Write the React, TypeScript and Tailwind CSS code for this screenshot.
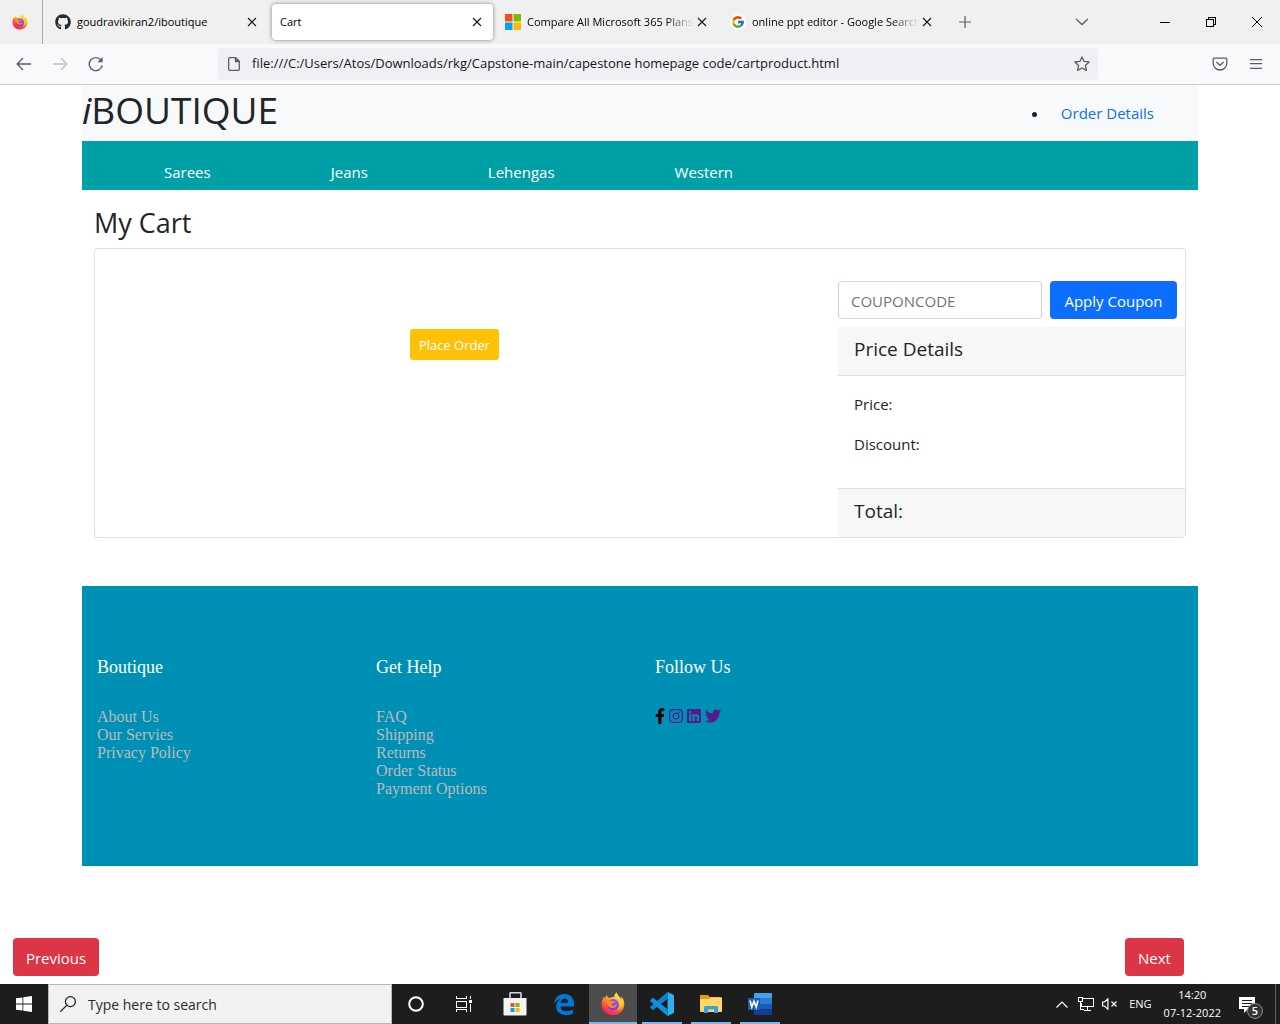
import type { ReactNode } from "react";
import { FaFacebookF, FaGithub, FaInstagram, FaLinkedin, FaTwitter } from "react-icons/fa";
import { FcGoogle } from "react-icons/fc";

function FirefoxLogo({ className, id }: { className: string; id: string }) {
  return (
    <svg viewBox="0 0 24 24" className={className} aria-hidden="true">
      <defs>
        <linearGradient id={`${id}-flame`} x1="0.8" y1="0" x2="0.3" y2="1">
          <stop offset="0" stopColor="#fff44f" />
          <stop offset="0.35" stopColor="#ffb61f" />
          <stop offset="0.65" stopColor="#ff5a3c" />
          <stop offset="1" stopColor="#f5156c" />
        </linearGradient>
        <radialGradient id={`${id}-globe`} cx="0.6" cy="0.3" r="0.8">
          <stop offset="0" stopColor="#a259ff" />
          <stop offset="1" stopColor="#5b3bd0" />
        </radialGradient>
      </defs>
      <path
        fill={`url(#${id}-flame)`}
        d="M15.6.5c-1.500 1-2.300 2.800-2.400 4.600-1.600-.2-3.300 0-4.700.8C7 5.500 6.200 4.300 6 2.900 5 3.700 4.500 4.900 4.300 6 3.800 5.800 3.300 5.300 3 4.700 1 7.200.4 10.200.7 13 1.300 19 6.200 23.300 12 23.300c6.500 0 11.300-5.200 11.300-11.200 0-2.900-1.200-6-3.200-7.600.3 1 .4 2 .2 2.900C19.200 4.800 16.500 3.300 15.600.5z"
      />
      <circle cx="12.200" cy="12.600" r="5.600" fill={`url(#${id}-globe)`} />
      <path
        fill="#ff8a1f"
        d="M4.300 9.300c2-1.500 4.500-1.300 6.200-.2l2.900.2c-.2 1.200-1.400 1.700-2.600 2.100-.8.300-1 1.500.1 2.100 1.800 1 3.200-.8 5-.4-.8 2.200-3 3.400-5.300 2.900-3.600-.8-4.300-4.200-6.300-6.700z"
      />
      <path fill="#ffd43a" d="M15.600.5c-1.500 1-2.300 2.800-2.400 4.600 2.600.5 5 2.700 5.300 5.600.8 3.600-.7 6.200-2.600 7.700 3.600-.8 5.600-3.900 5.400-7.300-.2-4-4.900-6-5.700-10.600z" opacity=".75" />
    </svg>
  );
}

function Windows10Logo({ className }: { className: string }) {
  return (
    <svg viewBox="0 0 16 16" className={className} fill="#fff" aria-hidden="true">
      <path d="M0 2.300 6.500 1.400v6.200H0zM7.300 1.300 16 0v7.600H7.300zM0 8.400h6.500v6.200L0 13.700zM7.300 8.400H16V16l-8.700-1.300z" />
    </svg>
  );
}

function MicrosoftLogo({ className }: { className: string }) {
  return (
    <svg viewBox="0 0 15 15" className={className} aria-hidden="true">
      <path fill="#f25022" d="M0 0h7v7H0z" />
      <path fill="#7fba00" d="M8 0h7v7H8z" />
      <path fill="#00a4ef" d="M0 8h7v7H0z" />
      <path fill="#ffb900" d="M8 8h7v7H8z" />
    </svg>
  );
}

function CloseGlyph() {
  return (
    <svg viewBox="0 0 10 10" className="size-2.5" fill="none" stroke="#15141a" strokeWidth="1.100" aria-hidden="true">
      <path d="m1 1 8 8M9 1 1 9" />
    </svg>
  );
}

function Tab({ title, icon, active, fade }: { title: string; icon?: ReactNode; active?: boolean; fade?: boolean }) {
  return (
    <div className="flex w-[225px] shrink px-0.5 py-1">
      <div
        className={
          active
            ? "flex w-full items-center gap-1.5 rounded bg-white px-2 shadow-[0_0_4px_rgba(0,0,0,0.45)]"
            : "flex w-full items-center gap-1.5 px-2"
        }
      >
        {icon}
        <span
          className={
            fade
              ? "min-w-0 flex-1 overflow-hidden whitespace-nowrap [mask-image:linear-gradient(to_left,transparent,black_28px)]"
              : "min-w-0 flex-1 overflow-hidden whitespace-nowrap"
          }
        >
          {title}
        </span>
        <button type="button" aria-label={`Close ${title}`} className="-ml-1.5 flex size-4 shrink-0 items-center justify-center">
          <CloseGlyph />
        </button>
      </div>
    </div>
  );
}

function BrowserChrome() {
  return (
    <header className="text-[#15141a]">
      <div className="flex h-11 bg-[#f0f0f0] text-[11px] text-black">
        <div className="mr-0.5 flex w-[43px] shrink-0 items-center justify-center border-r border-[#a9a9a9]">
          <FirefoxLogo id="ff-tab" className="mr-0.5 size-4" />
        </div>
        <Tab title="goudravikiran2/iboutique" icon={<FaGithub className="size-4 shrink-0 text-[#24292f]" />} />
        <Tab title="Cart" active />
        <Tab title="Compare All Microsoft 365 Plans" fade icon={<MicrosoftLogo className="size-4 shrink-0" />} />
        <Tab
          title="online ppt editor - Google Search"
          fade
          icon={
            <span className="flex size-4 shrink-0 items-center justify-center rounded-full bg-white">
              <FcGoogle className="size-3.5" />
            </span>
          }
        />
        <button type="button" aria-label="New tab" className="ml-1 flex w-8 items-center justify-center">
          <svg viewBox="0 0 12 12" className="size-3" stroke="#5b5b66" strokeWidth="1.200" aria-hidden="true">
            <path d="M6 0v12M0 6h12" />
          </svg>
        </button>
        <div className="ml-auto flex">
          <button type="button" aria-label="List all tabs" className="mr-11 flex w-8 items-center justify-center">
            <svg viewBox="0 0 14 8" className="h-2 w-3.5" fill="none" stroke="#5b5b66" strokeWidth="1.300" aria-hidden="true">
              <path d="m1 1 6 5.500L13 1" />
            </svg>
          </button>
          <button type="button" aria-label="Minimize" className="flex w-[46px] items-center justify-center">
            <svg viewBox="0 0 10 10" className="size-2.5" stroke="#000" shapeRendering="crispEdges" aria-hidden="true">
              <path d="M0 5.500h10" />
            </svg>
          </button>
          <button type="button" aria-label="Restore" className="flex w-[46px] items-center justify-center">
            <svg viewBox="0 0 10 10" className="size-2.5" fill="none" stroke="#000" shapeRendering="crispEdges" aria-hidden="true">
              <path d="M.5 2.500h7v7h-7zM2.500 2.500v-2h7v7h-2" />
            </svg>
          </button>
          <button type="button" aria-label="Close window" className="flex w-[46px] items-center justify-center">
            <svg viewBox="0 0 10 10" className="size-2.5" stroke="#000" aria-hidden="true">
              <path d="m0 0 10 10M10 0 0 10" />
            </svg>
          </button>
        </div>
      </div>

      <div className="flex h-[41px] items-center border-b border-[#cccccf] bg-[#f9f9fb] px-2">
        <nav aria-label="History" className="flex w-[210px] shrink-0 gap-1">
          <button type="button" aria-label="Back" className="flex size-8 items-center justify-center">
            <svg viewBox="0 0 16 16" className="size-4" fill="none" stroke="#5b5b66" strokeWidth="1.300" aria-hidden="true">
              <path d="M15 8H1.500M7 2 1.200 8 7 14" />
            </svg>
          </button>
          <button type="button" aria-label="Forward" disabled className="flex size-8 items-center justify-center">
            <svg viewBox="0 0 16 16" className="size-4" fill="none" stroke="#bfbfc5" strokeWidth="1.300" aria-hidden="true">
              <path d="M1 8h13.500M9 2l5.800 6L9 14" />
            </svg>
          </button>
          <button type="button" aria-label="Reload" className="flex size-8 items-center justify-center">
            <svg viewBox="0 0 16 16" className="size-4" fill="none" stroke="#5b5b66" strokeWidth="1.400" aria-hidden="true">
              <path d="M14.200 9.300A6.500 6.500 0 1 1 13 4.200" />
              <path d="M14.600 1v5.200H9.400z" fill="#5b5b66" stroke="none" />
            </svg>
          </button>
        </nav>
        <div className="flex h-8 min-w-0 max-w-[880px] flex-1 items-center rounded bg-[#f0f0f4] px-2">
          <svg viewBox="0 0 16 16" className="size-4 shrink-0" fill="none" stroke="#5b5b66" strokeWidth="1.300" strokeLinejoin="round" aria-hidden="true">
            <path d="M3.700 1.700h5.800l3.800 3.800v7.800a1 1 0 0 1-1 1H3.700a1 1 0 0 1-1-1V2.700a1 1 0 0 1 1-1z" />
            <path d="M9.500 1.700v3.800h3.800z" fill="#5b5b66" />
          </svg>
          <input
            type="text"
            aria-label="Address"
            defaultValue="file:///C:/Users/Atos/Downloads/rkg/Capstone-main/capestone homepage code/cartproduct.html"
            className="ml-2.5 min-w-0 flex-1 bg-transparent text-[13px] outline-none"
          />
          <button type="button" aria-label="Bookmark this page" className="shrink-0">
            <svg viewBox="0 0 16 16" className="size-4" fill="none" stroke="#5b5b66" strokeWidth="1.300" strokeLinejoin="round" aria-hidden="true">
              <path d="m8 .9 2.100 4.500 5 .6-3.700 3.400 1 5L8 12l-4.400 2.400 1-5L.9 6l5-.6z" />
            </svg>
          </button>
        </div>
        <div className="ml-auto flex gap-1">
          <button type="button" aria-label="Save to Pocket" className="flex size-8 items-center justify-center">
            <svg viewBox="0 0 16 16" className="size-4" fill="none" stroke="#5b5b66" strokeWidth="1.300" strokeLinejoin="round" aria-hidden="true">
              <path d="M2.200 2.200h11.600c.6 0 1 .4 1 1v4a6.700 6.700 0 0 1-13.600 0v-4c0-.6.4-1 1-1z" />
              <path d="m4.700 6.300 3.300 3 3.300-3" strokeLinecap="round" />
            </svg>
          </button>
          <button type="button" aria-label="Open application menu" className="flex size-8 items-center justify-center">
            <svg viewBox="0 0 12 10" className="h-2.5 w-3" stroke="#5b5b66" strokeWidth="1.200" aria-hidden="true">
              <path d="M0 .7h12M0 4.700h12M0 9.300h12" />
            </svg>
          </button>
        </div>
      </div>
    </header>
  );
}

function FooterColumn({ title, children }: { title: string; children: ReactNode }) {
  return (
    <section className="px-[15px]">
      <h4 className="mb-8 text-[18px] leading-[18px] font-medium text-white">{title}</h4>
      {children}
    </section>
  );
}

function FooterLinks({ items }: { items: string[] }) {
  return (
    <ul className="text-[16px] leading-[18px] text-[#bbbbbb]">
      {items.map((item) => (
        <li key={item}>
          <a href="#">{item}</a>
        </li>
      ))}
    </ul>
  );
}

function CartPage() {
  return (
    <main className="flex-1 bg-white text-[15px] leading-6 text-[#212529]">
      <div className="mx-auto max-w-[1140px] px-3">
        <div className="flex h-14 justify-between bg-[#f8f9fa]">
          <h1 className="text-[37px] leading-[50px]">
            <i>i</i>BOUTIQUE
          </h1>
          <ul className="mt-4 mr-11 list-disc">
            <li className="pl-3">
              <a href="#" className="text-[#0d6efd]">
                Order Details
              </a>
            </li>
          </ul>
        </div>
        <nav aria-label="Categories" className="flex h-[49px] gap-[120px] bg-[#00a0a6] pt-[19px] pl-[82px] text-white">
          <a href="#">Sarees</a>
          <a href="#">Jeans</a>
          <a href="#">Lehengas</a>
          <a href="#">Western</a>
        </nav>

        <section className="px-3 pt-4">
          <h2 className="mb-2 text-[27px] leading-[34px]">My Cart</h2>
          <div className="flex rounded border border-[#dfdfdf]">
            <div className="flex flex-1 items-start justify-center pt-20 pr-6">
              <button type="button" className="h-[31px] rounded-[3px] bg-[#ffc107] px-[9px] text-[13px] text-white">
                Place Order
              </button>
            </div>
            <div className="w-[347px] pt-8">
              <form className="mb-2 flex gap-2 pr-2" onSubmit={(event) => event.preventDefault()}>
                <input
                  type="text"
                  aria-label="Coupon code"
                  placeholder="COUPONCODE"
                  className="h-[38px] min-w-0 flex-1 rounded border border-[#ced4da] px-3 pt-0.5 placeholder:text-[#6c757d]"
                />
                <button type="submit" className="h-[38px] w-[127px] rounded bg-[#0d6efd] pt-0.5 text-white">
                  Apply Coupon
                </button>
              </form>
              <h3 className="h-[49px] border-b border-[#dfdfdf] bg-[#f7f7f7] px-4 pt-2.5 text-[19px]">Price Details</h3>
              <div className="flex h-28 flex-col gap-4 px-4 pt-4">
                <p>Price:</p>
                <p>Discount:</p>
              </div>
              <h3 className="h-[49px] border-t border-[#dfdfdf] bg-[#f7f7f7] px-4 pt-2.5 text-[19px]">Total:</h3>
            </div>
          </div>
        </section>

        <footer className="mt-12 grid h-[280px] grid-cols-4 bg-[#008fb5] pt-[72px] font-['Liberation_Serif',serif]">
          <FooterColumn title="Boutique">
            <FooterLinks items={["About Us", "Our Servies", "Privacy Policy"]} />
          </FooterColumn>
          <FooterColumn title="Get Help">
            <FooterLinks items={["FAQ", "Shipping", "Returns", "Order Status", "Payment Options"]} />
          </FooterColumn>
          <FooterColumn title="Follow Us">
            <div className="flex gap-1 text-[16px] text-[#551a8b]">
              <a href="#" aria-label="Facebook" className="text-black">
                <FaFacebookF className="h-4 w-2.5" />
              </a>
              <a href="#" aria-label="Instagram">
                <FaInstagram className="h-4 w-3.5" />
              </a>
              <a href="#" aria-label="LinkedIn">
                <FaLinkedin className="h-4 w-3.5" />
              </a>
              <a href="#" aria-label="Twitter">
                <FaTwitter className="size-4" />
              </a>
            </div>
          </FooterColumn>
        </footer>
      </div>
      <div className="mt-[72px] mb-2 flex justify-between pr-24 pl-[13px] text-white">
        <button type="button" className="h-[38px] w-[86px] rounded bg-[#dc3545] pt-0.5">
          Previous
        </button>
        <button type="button" className="h-[38px] w-[59px] rounded bg-[#dc3545] pt-0.5">
          Next
        </button>
      </div>
    </main>
  );
}

function TaskButton({ label, running, active, children }: { label: string; running?: boolean; active?: boolean; children: ReactNode }) {
  return (
    <button
      type="button"
      aria-label={label}
      className={
        active
          ? "flex h-10 w-12 flex-col items-center justify-between bg-[#4d4d4d]"
          : "flex h-10 w-12 flex-col items-center justify-between"
      }
    >
      <span className="flex flex-1 items-center pt-0.5">{children}</span>
      <span className={active ? "h-0.5 w-full bg-[#76b9ed]" : running ? "h-0.5 w-10 bg-[#76b9ed]" : "h-0.5 w-10"} />
    </button>
  );
}

function Taskbar() {
  return (
    <footer className="flex h-10 bg-[#1d1d1d] text-[11px] text-white">
      <button type="button" aria-label="Start" className="flex w-12 shrink-0 items-center justify-center">
        <Windows10Logo className="size-4" />
      </button>
      <label className="flex w-[344px] items-center gap-3 border border-[#b9b9b9] bg-[#f2f2f2] pl-[11px]">
        <svg viewBox="0 0 16 16" className="size-4 shrink-0" fill="none" stroke="#1a1a1a" strokeWidth="1.200" aria-hidden="true">
          <circle cx="10.400" cy="5.600" r="5" />
          <path d="M6.900 9.200.4 15.700" />
        </svg>
        <input
          type="text"
          aria-label="Search Windows"
          placeholder="Type here to search"
          className="min-w-0 flex-1 bg-transparent text-[14px] outline-none placeholder:text-[#2b2b2b]"
        />
      </label>
      <TaskButton label="Cortana">
        <svg viewBox="0 0 16 16" className="size-4" fill="none" stroke="#fff" strokeWidth="2" aria-hidden="true">
          <circle cx="8" cy="8" r="6.800" />
        </svg>
      </TaskButton>
      <TaskButton label="Task View">
        <svg viewBox="0 0 16 16" className="size-4" fill="none" stroke="#fff" shapeRendering="crispEdges" aria-hidden="true">
          <path d="M.5 0v2.500h10V0M.5 5.500h10v6H.5zM.5 16v-2.500h10V16M14.500 0v3M14.500 8v8" />
          <path d="M13 4h3v3h-3z" fill="#fff" stroke="none" />
        </svg>
      </TaskButton>
      <div className="ml-[3px] flex gap-px">
        <TaskButton label="Microsoft Store">
          <svg viewBox="0 0 24 24" className="size-6" aria-hidden="true">
            <path d="M7 7V1.600C7 1 7.400.7 8 .7h9c.6 0 1 .3 1 .9V7" fill="none" stroke="#d8d8d8" strokeWidth="1.600" />
            <path d="M.5 6h23v16.500c0 .6-.4 1-1 1h-21c-.6 0-1-.4-1-1z" fill="#f3f3f3" />
            <path d="M7.500 11h4v4h-4z" fill="#f25022" />
            <path d="M12.500 11h4v4h-4z" fill="#7fba00" />
            <path d="M7.500 16h4v4h-4z" fill="#00a4ef" />
            <path d="M12.500 16h4v4h-4z" fill="#ffb900" />
          </svg>
        </TaskButton>
        <TaskButton label="Microsoft Edge">
          <svg viewBox="0 0 20 21" className="h-[21px] w-5" fill="#0078d7" aria-hidden="true">
            <path d="M0 9.800C.8 3.700 4.800 0 10.500 0 16.700 0 20 4.500 20 10.300v2.200H6.600c.1 3.300 2.500 4.800 6 4.800 2.300 0 4.500-.6 6.300-1.700v4.200c-2 .9-4.500 1.200-7 1.200-6.200 0-9.700-3.300-9.700-8.400 0-3.300 1.700-6 4.600-7.700C3.900 5.400 1.600 7 0 9.800zM6.700 8.700h7.400c0-2.600-1.100-4.100-3.500-4.100-2.200 0-3.600 1.700-3.900 4.100z" />
          </svg>
        </TaskButton>
        <TaskButton label="Firefox" active>
          <FirefoxLogo id="ff-task" className="size-6" />
        </TaskButton>
        <TaskButton label="Visual Studio Code" running>
          <svg viewBox="0 0 24 24" className="size-6" aria-hidden="true">
            <path fill="#0b84d0" d="M17.500 0v6.700L3 18.200l-2.400-2c-.6-.5-.6-1.200 0-1.700z" />
            <path fill="#1191dc" d="M17.500 24v-6.700L3 5.800l-2.400 2c-.6.5-.6 1.200 0 1.700z" />
            <path fill="#2eaef5" d="m17.500 0 5.600 2.600c.6.300.9.800.9 1.400v16c0 .6-.3 1.100-.9 1.400L17.500 24c-.5.200-.9.100-1.200-.3.700.6 1.300.2 1.300-.6V.9c0-.8-.6-1.200-1.300-.6.300-.4.700-.5 1.200-.3z" />
          </svg>
        </TaskButton>
        <TaskButton label="File Explorer" running>
          <svg viewBox="0 0 22 18" className="h-[18px] w-[22px]" aria-hidden="true">
            <path fill="#e39c12" d="M0 1c0-.6.400-1 1-1h7l2 2h10.500c.6 0 1 .4 1 1v4H0z" />
            <path fill="#ffd767" d="M0 4h9l1.500-1.500H21c.6 0 1 .4 1 1V16c0 .6-.4 1-1 1H1c-.6 0-1-.4-1-1z" />
            <path fill="#3b9fdc" d="M4 18v-5.500c0-.8.700-1.500 1.500-1.500h11c.8 0 1.500.7 1.500 1.500V18h-4v-3.500H8V18z" />
          </svg>
        </TaskButton>
        <TaskButton label="Word" running>
          <svg viewBox="0 0 24 22" className="h-[22px] w-6" aria-hidden="true">
            <path fill="#41a5ee" d="M7 0h16c.6 0 1 .4 1 1v4.800H6V1c0-.6.400-1 1-1z" />
            <path fill="#2b7cd3" d="M6 5.500h18V11H6z" />
            <path fill="#185abd" d="M6 11h18v5.500H6z" />
            <path fill="#103f91" d="M6 16.500h18V21c0 .6-.4 1-1 1H7c-.6 0-1-.4-1-1z" />
            <rect y="5" width="12" height="12" rx="1" fill="#1b5cbe" />
            <path d="m2 7.500 1.800 6.500L6 8.300 8.200 14 10 7.500" fill="none" stroke="#fff" strokeWidth="1.700" />
          </svg>
        </TaskButton>
      </div>
      <div className="ml-auto flex items-center">
        <button type="button" aria-label="Show hidden icons" className="mr-2.5">
          <svg viewBox="0 0 12 7" className="h-[7px] w-3" fill="none" stroke="#fff" strokeWidth="1.200" aria-hidden="true">
            <path d="m.5 6.500 5.500-5.500 5.500 5.500" />
          </svg>
        </button>
        <button type="button" aria-label="Network" className="mr-2">
          <svg viewBox="0 0 16 14" className="h-3.5 w-4" fill="none" stroke="#fff" shapeRendering="crispEdges" aria-hidden="true">
            <path d="M5 1.500h10.500v8H3.500V6M.5.500h4v4h-4zM2.500 4.500v8M9.500 10v3M6 13.500h7M2 12.500h4" />
          </svg>
        </button>
        <button type="button" aria-label="Volume muted" className="mr-3">
          <svg viewBox="0 0 15 12" className="h-3 w-[15px]" fill="none" stroke="#fff" strokeWidth="1.200" aria-hidden="true">
            <path d="M.6 4v4h2l3.300 3.300V.7L2.600 4z" />
            <path d="m9.500 3.500 5 5M14.500 3.500l-5 5" />
          </svg>
        </button>
        <span className="mr-3">ENG</span>
        <time dateTime="2022-12-07T14:20" className="mr-[18px] flex flex-col text-center leading-[18px]">
          <span>14:20</span>
          <span>07-12-2022</span>
        </time>
        <button type="button" aria-label="Notifications, 5 new" className="relative mr-2.5 h-10 w-[26px]">
          <svg viewBox="0 0 16 16" className="mt-0.5 size-4" aria-hidden="true">
            <path fill="#fff" d="M0 0h16v12H9l-4 4v-4H0z" />
            <path stroke="#1d1d1d" d="M3 3.500h10M3 6.500h10M3 9.500h7" shapeRendering="crispEdges" />
          </svg>
          <span className="absolute top-[19px] left-2 flex size-4 items-center justify-center rounded-full border border-[#8a8a8a] bg-[#333333] font-semibold">
            5
          </span>
        </button>
        <span className="mr-1 h-10 w-px bg-[#5e5e5e]" />
      </div>
    </footer>
  );
}

export default function App() {
  return (
    <div className="flex min-h-screen flex-col bg-white font-['Open_Sans','Noto_Sans',sans-serif]">
      <BrowserChrome />
      <CartPage />
      <Taskbar />
    </div>
  );
}
